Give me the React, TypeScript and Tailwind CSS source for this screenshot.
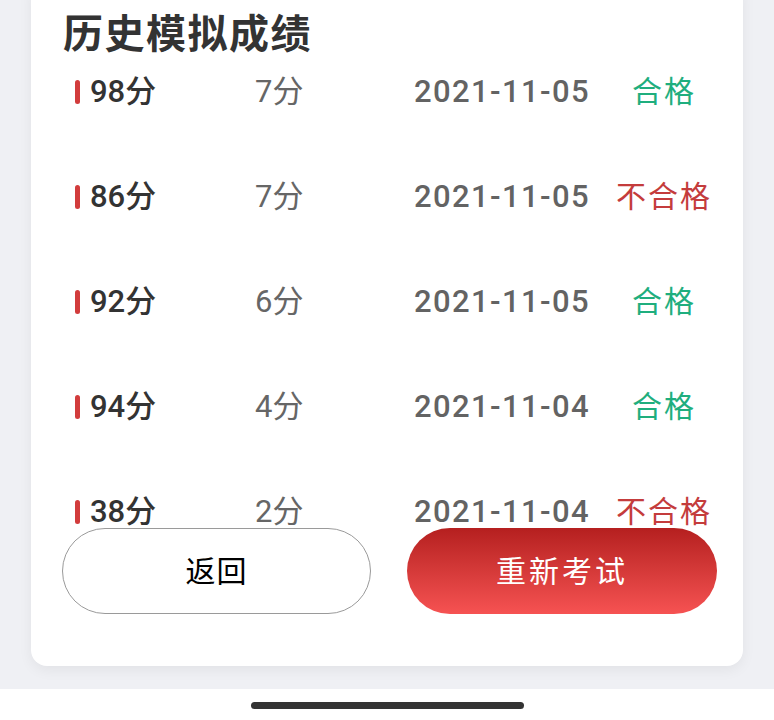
import React from 'react';

type Record = {
    score: number;
    used: number;
    date: string;
    pass: boolean;
};

const records: Record[] = [
    { score: 98, used: 7, date: '2021-11-05', pass: true },
    { score: 86, used: 7, date: '2021-11-05', pass: false },
    { score: 92, used: 6, date: '2021-11-05', pass: true },
    { score: 94, used: 4, date: '2021-11-04', pass: true },
    { score: 38, used: 2, date: '2021-11-04', pass: false },
];

const font = { fontFamily: 'Roboto, "Noto Sans CJK SC", sans-serif' };

function RecordRow({ r }: { r: Record }) {
    return (
        <div className="h-[105px] pt-[10px] shrink-0">
            <div className="flex items-center h-[40px] leading-[40px] text-[30px]">
                {/* score */}
                <div className="w-[180px] flex items-center gap-[10px]">
                    <span className="w-[5px] h-[24px] rounded-full bg-[#d23c3c]" />
                    <span className="text-[#333] font-medium text-[31px]">{r.score}分</span>
                </div>
                {/* time used */}
                <div className="w-[159px] text-[#666] text-[31px]">{r.used}分</div>
                {/* date */}
                <div className="w-[200px] text-[#636363] font-medium text-[31px] tracking-[1.4px]">{r.date}</div>
                {/* status */}
                <div
                    className={`w-[100px] text-center tracking-[2px] ${r.pass ? 'text-[#1fae7e]' : 'text-[#c43c3c]'}`}
                >
                    {r.pass ? '合格' : '不合格'}
                </div>
            </div>
        </div>
    );
}

export default function App() {
    return (
        <div className="w-[774px] h-[720px] overflow-hidden bg-[#eff0f4] flex flex-col" style={font}>
            <div className="flex-1 px-[31px] pb-[23px] flex flex-col">
                {/* Card */}
                <div className="-mt-[20px] bg-white rounded-[16px] shadow-[0_4px_14px_rgba(0,0,0,0.06)] pt-[35px] pb-[52px] flex flex-col">
                    <h1 className="pl-[32px] text-[40px] leading-none font-bold text-[#333] tracking-[1.5px]">
                        历史模拟成绩
                    </h1>

                    {/* Records list (scrolls) */}
                    <div className="mt-[7px] h-[465px] overflow-hidden pl-[44px] flex flex-col">
                        {records.map((r, i) => (
                            <RecordRow key={i} r={r} />
                        ))}
                    </div>

                    {/* Actions */}
                    <div className="mt-[1px] pl-[31px] flex">
                        <button className="w-[309px] h-[86px] rounded-full border border-[#9a9a9a] bg-white text-black text-[30px] tracking-[1px]">
                            返回
                        </button>
                        <button className="ml-[36px] w-[310px] h-[86px] rounded-full bg-gradient-to-b from-[#b51f1f] to-[#f65252] text-white text-[30px] tracking-[3px]">
                            重新考试
                        </button>
                    </div>
                </div>
            </div>

            {/* Home indicator */}
            <div className="h-[31px] bg-white flex justify-center pt-[13px] shrink-0">
                <div className="w-[273px] h-[7px] rounded-full bg-[#333]" />
            </div>
        </div>
    );
}
